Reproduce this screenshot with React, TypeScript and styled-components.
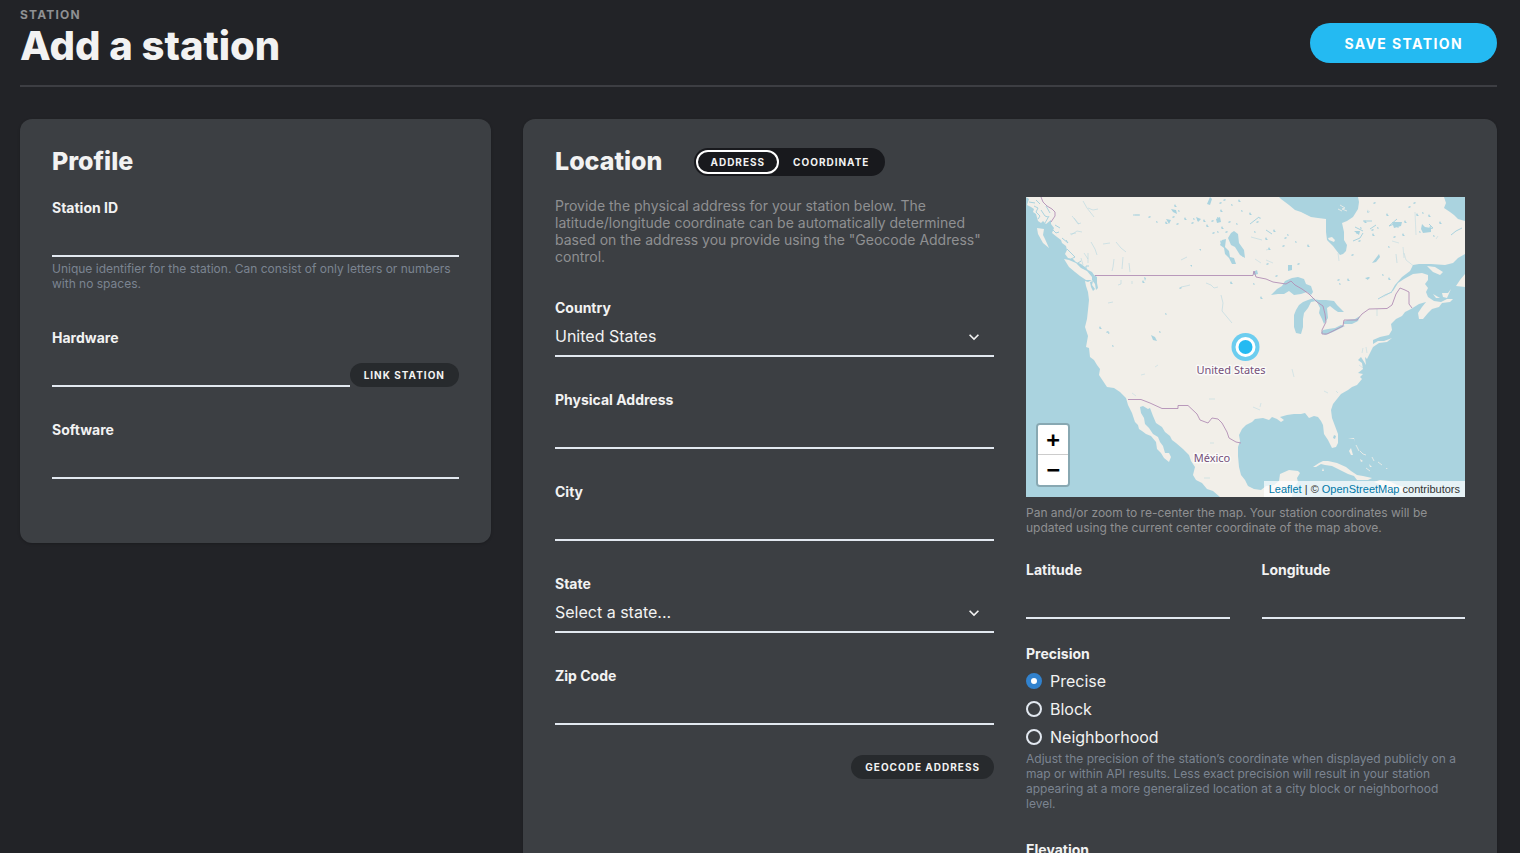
import React from "react";
import styled, { createGlobalStyle, css } from "styled-components";

const color = {
  page: "#222327",
  card: "#3c3f43",
  rule: "#3d3e43",
  text: "#f2f2f2",
  muted: "#8f9092",
  hint: "#7b8491",
  line: "#e2e8f0",
  accent: "#24baf2",
  chip: "#272a2d",
  track: "#18191d",
  radio: "#3182ce",
  water: "#aad3df",
  land: "#f2efe9",
  border: "#b28fb5",
};

const Global = createGlobalStyle`
  *, *::before, *::after { box-sizing: border-box; }
  body {
    margin: 0;
    background: ${color.page};
    color: ${color.text};
    font-family: Inter, "Liberation Sans", sans-serif;
    font-size: 16px;
  }
  button, input, select { font: inherit; color: inherit; }
`;

const Page = styled.div`
  padding: 0 23px 32px 20px;
`;

const Header = styled.header`
  display: flex;
  justify-content: space-between;
  align-items: flex-end;
  padding: 7px 0 16px;
  margin-bottom: 32px;
  border-bottom: 2px solid ${color.rule};
`;

const Eyebrow = styled.div`
  font-size: 12px;
  line-height: 16px;
  font-weight: 700;
  letter-spacing: 0.1em;
  text-transform: uppercase;
  color: ${color.muted};
`;

const PageTitle = styled.h1`
  margin: 0;
  font-size: 40px;
  line-height: 46px;
  font-weight: 800;
`;

const SaveButton = styled.button`
  height: 40px;
  margin-bottom: 6px;
  padding: 0 34px;
  border: 0;
  border-radius: 20px;
  background: ${color.accent};
  color: #fff;
  font-size: 14px;
  font-weight: 700;
  letter-spacing: 0.1em;
  text-transform: uppercase;
  cursor: pointer;
`;

const Cards = styled.main`
  display: grid;
  grid-template-columns: repeat(3, minmax(0, 1fr));
  gap: 32px;
  align-items: start;
`;

const Card = styled.section<{ $span?: number }>`
  grid-column: span ${(p) => p.$span ?? 1};
  padding: 28px 32px 64px;
  border-radius: 12px;
  background: ${color.card};
  box-shadow: 0 1px 3px rgba(0, 0, 0, 0.2);
`;

const CardHead = styled.div`
  display: flex;
  align-items: center;
  gap: 32px;
  height: 30px;
  margin-bottom: 20px;
`;

const CardTitle = styled.h2`
  margin: 0;
  padding-bottom: 2px;
  font-size: 25px;
  line-height: 28px;
  font-weight: 800;
`;

const Columns = styled.div`
  display: grid;
  grid-template-columns: repeat(2, minmax(0, 1fr));
  gap: 32px;
`;

const Stack = styled.div<{ $gap: number }>`
  display: flex;
  flex-direction: column;
  gap: ${(p) => p.$gap}px;
`;

const chip = css`
  height: 24px;
  border-radius: 12px;
  font-size: 10px;
  font-weight: 700;
  letter-spacing: 0.1em;
  text-transform: uppercase;
  white-space: nowrap;
  cursor: pointer;
`;

const Chip = styled.button`
  ${chip}
  flex: none;
  padding: 0 14px;
  border: 0;
  background: ${color.chip};
`;

const Toggle = styled.div`
  display: flex;
  padding: 2px;
  border-radius: 14px;
  background: ${color.track};
`;

const ToggleOption = styled.button<{ $active?: boolean }>`
  ${chip}
  padding: 0 12px;
  border: 2px solid ${(p) => (p.$active ? "#fff" : "transparent")};
  background: transparent;
`;

const labelText = css`
  display: block;
  padding-top: 2px;
  font-size: 14px;
  line-height: 18px;
  font-weight: 700;
`;

const Label = styled.label`
  ${labelText}
`;

const GroupLabel = styled.div`
  ${labelText}
`;

const control = css`
  display: block;
  width: 100%;
  min-width: 0;
  height: 40px;
  padding: 0;
  border: 0;
  border-bottom: 2px solid ${color.line};
  border-radius: 0;
  background: transparent;
  outline: none;
`;

const Input = styled.input`
  ${control}
`;

const ControlRow = styled.div`
  display: flex;
  align-items: flex-end;
`;

const SelectBox = styled.div`
  display: grid;
  align-items: center;

  > * {
    grid-area: 1 / 1;
  }
`;

const Select = styled.select`
  ${control}
  appearance: none;
  cursor: pointer;
`;

const Chevron = styled.svg`
  width: 20px;
  height: 20px;
  margin-right: 10px;
  justify-self: end;
  pointer-events: none;
`;

const Intro = styled.p`
  margin: 0;
  font-size: 14px;
  line-height: 17px;
  color: ${color.muted};
`;

const Hint = styled.p`
  margin: 4px 0;
  font-size: 12px;
  line-height: 15px;
  color: ${color.hint};
`;

const Caption = styled.p`
  margin: 8px 0 0;
  font-size: 12px;
  line-height: 15px;
  color: ${color.muted};
`;

const Actions = styled.div`
  display: flex;
  justify-content: flex-end;
  align-items: center;
  height: 20px;
`;

const Radios = styled.div`
  display: flex;
  flex-direction: column;
  gap: 8px;
  padding-top: 8px;
`;

const RadioRow = styled.label`
  display: flex;
  align-items: center;
  gap: 8px;
  height: 20px;
  cursor: pointer;
`;

const Radio = styled.input`
  appearance: none;
  width: 16px;
  height: 16px;
  margin: 0;
  border: 2px solid ${color.line};
  border-radius: 50%;

  &:checked {
    border: 5px solid ${color.radio};
    background: #fff;
  }
`;

const MapFrame = styled.div`
  position: relative;
  height: 300px;
  overflow: hidden;
  background: ${color.water};
`;

const MapArt = styled.svg`
  display: block;
  width: 100%;
  height: 100%;
`;

const Zoom = styled.div`
  position: absolute;
  left: 10px;
  bottom: 10px;
  border: 2px solid rgba(0, 0, 0, 0.2);
  border-radius: 4px;
  background-clip: padding-box;
`;

const ZoomButton = styled.button`
  display: block;
  width: 30px;
  height: 30px;
  padding: 0;
  border: 0;
  background: #fff;
  color: #000;
  font: bold 22px/28px "DejaVu Sans Mono", monospace;
  cursor: pointer;

  &:first-child {
    border-bottom: 1px solid #ccc;
    border-radius: 2px 2px 0 0;
  }
  &:last-child {
    border-radius: 0 0 2px 2px;
  }
`;

const Attribution = styled.div`
  position: absolute;
  right: 0;
  bottom: 0;
  padding: 0 5px;
  background: rgba(255, 255, 255, 0.7);
  color: #333;
  font: 11px/16px "Liberation Sans", sans-serif;

  a {
    color: #0078a8;
    text-decoration: none;
  }
`;

const LAND = `M0 0L3 2 1 8 5 10 8 12 7 15 10 17 12 24 15 26 17 24 20 27 25 23 25 27 28 31 26 36 31 40 35 43 36 46 40 49 41 53
39 57 42 61 47 62 50 65 55 67 59 70 62 73 66 75 68 78 71 80 71 86 72 91 70 93 69 87 66 83 62 85 59 84 60 89 62 95 63 103 62 113
61 122 59 130 62 139 60 150 63 151 64 160 68 163 71 168 74 172 73 178 77 184 81 190 88 191 94 195 100 201 102 208 106 216 109 225
112 228 113 232 116 234 120 237 125 239 130 245 131 252 135 256 138 261 143 265 145 260 143 256 139 256 137 249 134 245 132 240
127 237 123 231 119 227 118 221 115 216 114 210 117 209 122 212 124 211 127 219 130 226 136 230 139 235 144 239 146 243 150 246
157 252 163 258 165 264 169 270 167 278 170 283 176 286 181 292 187 294 194 300
L220 300 266 300 267 292 272 285 271 281 274 276 272 274 263 273 254 277 253 284 248 288 240 289 235 293 228 292 222 289 219 283
215 278 213 270 212 259 212 250 214 244 213 238 216 232 220 228 226 225 229 222 237 221 243 223 246 220 251 222 255 225 258 223
254 220 261 218 268 217 275 217 279 216 283 221 288 219 292 220 295 224 297 228 298 237 302 243 304 247 306 251 310 250 312 246
312 237 309 229 306 221 305 213 307 207 311 202 315 197 322 193 326 190 331 188 336 182 334 180 337 177 332 176 337 172 336 166
332 163 335 160 340 168 339 160 341 162 345 154 347 150 L353 146 361 145 366 141 358 144 352 144 347 147 347 143 354 140 363 138
366 133 365 127 370 122 376 119 379 115 385 112 393 107 400 105 396 110 392 116 393 122 397 122 402 116 406 112 413 110 416 106
424 105 427 102 421 102 415 105 408 104 402 100 400 95 402 91 399 87 402 83 402 78 396 76 387 77 378 82 372 86 367 94 361 98 354 102
L365 95 369 88 376 80 384 74 387 68 393 67 405 67 419 68 427 66 432 61 439 57
L439 24 432 22 428 18 424 15 418 11 420 6 418 0 L332 0 333 5 332 12 327 20 321 24 316 26 318 35 318 43 321 48 320 54 317 57 314 58
310 53 307 49 301 43 300 35 300 22 292 21 285 20 275 15 269 13 263 8 255 2 253 0Z`;

const ISLANDS = `M11 31L18 32 17 38 19 42 23 51 17 46 12 37Z
M38 62L43 63 50 66 55 71 61 74 66 80 66 83 60 83 54 79 49 75 43 70Z
M287 270L293 266 297 264 302 264 311 266 320 270 325 274 331 278 337 279 346 281 342 283 331 283 328 279 322 277 314 273 306 269 299 268 295 267 290 270Z
M297 271L298 274 296 274ZM348 285L354 283 363 284 371 288 378 290 378 296 368 294 362 297 351 294 344 292 355 291 353 287Z
M325 251L327 258 325 258 323 254ZM322 241L328 241 329 245 328 242Z
M302 41L306 40 309 43 308 45 303 43Z M401 69L409 70 417 75 414 78 407 75Z M407 97L414 101 410 101Z
M439 77L434 83 430 89 439 90Z M416 96L422 96 425 92 421 101 417 100Z M334 262L337 264 335 265ZM343 267L346 270 344 270ZM360 271L362 272 360 272Z`;

const LAKES = `M245 98L251 92 256 89 259 84 266 81 272 80 278 82 280 87 285 89 287 95 285 98 281 95 275 97 268 98 263 94 258 97 252 97Z
M288 101L282 103 277 105 273 108 270 113 268 118 268 130 270 136 275 137 277 130 277 122 278 116 282 111 285 105 290 104Z
M287 102L293 103 300 103 308 104 311 108 315 112 318 115 312 115 309 113 304 109 301 111 302 121 298 127 296 122 293 116 294 111 291 105Z
M295 136L299 138 307 135 315 131 319 129 315 128 309 131 302 132 297 133ZM317 125L321 123 329 122 334 119 332 124 326 127 318 127Z
M205 36L208 34 212 37 213 46 218 53 219 61 214 58 209 50 205 48 202 41Z
M196 43L200 42 199 50 203 54 204 60 208 61 210 67 206 67 203 61 199 57 198 51 194 48Z
M262 68L266 68 266 73 262 74ZM184 0L186 2 184 8 181 7Z
M125 138L129 140 131 144 127 143ZM308 238L310 239 309 242 307 241Z
M118 80L120 81 119 84ZM64 85L67 84 66 88 69 92 67 94 65 90Z
M145 12L150 13 151 17 147 15ZM190 22L194 20 195 25 191 26ZM140 22L145 23 143 27ZM170 20L175 22 172 25Z
M366 25L376 25 375 29 368 31ZM396 27L399 30 405 31 405 35 397 36 395 32ZM328 34L334 34 333 38ZM346 66L350 61 353 57 354 60 350 65Z
M227 75L231 73 232 77 228 78ZM339 81L343 80 342 83Z M164 68L166 68 166 70ZM82 135L84 136 82 137ZM71 131L73 132ZM173 52L175 52 175 54Z`;

const RIVERS = `M57 4L61 11 68 20 M62 11L67 13 72 12 M48 21L52 27 55 26 M45 38L51 34 56 35 M65 45L69 52 71 58 M90 45L95 51 100 55
M88 62L87 70 86 74 M97 60L96 72 M103 66L104 75 M55 61L57 68 M62 56L62 66 M82 106L87 105 M95 83L95 87 92 88 M106 84L106 87
M155 90L160 89 164 88 M180 86L185 88 188 91 192 90 M195 98L197 106 196 114 201 120 206 126 M77 47L84 46 M155 63L161 60
M109 18L113 18 M204 86L206 86 M46 19L53 27 M50 36L44 37 M62 62L58 56 M225 40L236 43 M370 57L371 66`;

const FJORDS = `M27 33L30 36 33 35 M36 41L42 46 40 43 M41 52L49 60 45 62 M52 66L55 64 M63 69L60 69 60 72 M8 9L12 11 10 15 14 19 12 22
M3 5L9 6 M15 13L19 19 22 20 M20 9L24 16 M10 3L14 7 M19 26L23 19 M29 28L34 31 M224 27L233 20 M240 33L246 37
M352 102L359 98 366 95 M327 44L334 41 337 36 M344 32L350 28 M329 30L337 34 M425 38L430 34 436 31 M337 24L346 24
M371 22L363 29 371 26 M403 27L407 31 399 33 M107 18L114 18`;

const CREEKS = `M351 112L351 119 M389 15L390 38 M378 56L380 63 389 70 M377 50L378 61 M410 42L412 39 M366 44L373 46 M341 13L344 15
M229 62L235 66 M312 56L313 64 M240 63L247 66 M240 53L244 52 M183 202L189 202 M178 281L184 281 M266 172L268 180 M227 210L234 213
M298 194L302 196 M310 194L312 196 M106 196L110 199 M115 178L119 177 M129 170L132 168 M333 168L337 171 M337 151L336 156
M340 150L341 156 M184 246L188 246 M235 206L234 210`;

const SPECKS: Array<[number, number]> = [
  [123, 20], [131, 24], [140, 26], [147, 20], [153, 13], [159, 22], [166, 26], [172, 22], [181, 29], [186, 24], [192, 20], [195, 14],
  [198, 3], [206, 7], [213, 4], [203, 25], [211, 26], [196, 31], [187, 36], [192, 34], [149, 9], [151, 27], [168, 21], [178, 24],
  [194, 6], [216, 13], [195, 45], [200, 35], [217, 58], [224, 17], [231, 25], [229, 34], [240, 42], [259, 41], [270, 44], [282, 49],
  [241, 67], [228, 86], [235, 101], [250, 79], [262, 37], [248, 34], [272, 67], [342, 14], [339, 25], [348, 6], [352, 30], [361, 18],
  [368, 40], [363, 49], [377, 38], [388, 6], [397, 15], [403, 19], [404, 30], [394, 34], [391, 18], [333, 44], [331, 35], [347, 38],
  [326, 58], [314, 86], [322, 83], [342, 81], [357, 77], [363, 82], [387, 72], [408, 38], [414, 26], [312, 83],
  [140, 116], [117, 85], [154, 91], [134, 134], [74, 131], [81, 135], [87, 148], [205, 86], [95, 226], [136, 290], [399, 204],
  [383, 10], [372, 29], [379, 25], [346, 33], [335, 30], [243, 52], [257, 49], [234, 20],
];

const BORDERS = `M15 0L17 5 21 9 26 12 29 15 29 19 25 25 M69 78.5H227L228 74 230 80 240 82 247 85 260 87 265 84 269 88 276 92 283 97 286 100 291 105
297 109 299 117 300 125 296 133 296 137 301 137 309 133 317 129 318 123 331 123 336 117 343 112 361 111.5 366 108 370 97 374 91
379 93 383 95 383 107 386 111
M102 202.5H115L124 206 136 211.5H152V208.5H162L171 217 174 223 182 226 186 221 192 222 196 226 201 235 203 241 210 245 215 246`;

function speck(x: number, y: number, i: number) {
  if (i % 3 === 0) return `M${x - 1} ${y}l2 -1 1 1 -2 1Z`;
  if (i % 3 === 1) return `M${x - 1} ${y}l2 1 -1 1 -1 -1Z`;
  return `M${x - 1} ${y}l1 -2 1 2 1 1 -2 0Z`;
}

function StationMap() {
  return (
    <MapFrame>
      <MapArt viewBox="0 0 439 300" preserveAspectRatio="xMidYMid slice" role="img" aria-label="Map of North America">
        <path d={LAND} fill={color.land} />
        <path d={ISLANDS} fill={color.land} />
        <path d={LAKES} fill={color.water} />
        <path d={RIVERS} fill="none" stroke={color.water} strokeWidth="0.7" strokeOpacity="0.7" />
        <path d={FJORDS} fill="none" stroke={color.water} strokeWidth="1" />
        <path d={CREEKS} fill="none" stroke={color.water} strokeWidth="0.6" strokeOpacity="0.7" />
        {SPECKS.map(([x, y], i) => (
          <path key={i} d={speck(x, y, i)} fill={color.water} />
        ))}
        <path
          d="M314 8l5 3-3 1 5 2M312 12l4 2M340 271l4 3M334 254l3 3 3 1M346 260l2 4M352 265l4 3M330 248l3 6"
          fill="none"
          stroke={color.land}
          strokeWidth="0.8"
        />
        <path d={BORDERS} fill="none" stroke={color.border} strokeWidth="0.9" strokeLinejoin="round" />
        <g
          fontFamily="'Noto Sans', sans-serif"
          fontSize="11"
          textAnchor="middle"
          fill="#75507a"
          stroke="#fff"
          strokeOpacity="0.7"
          strokeWidth="3"
          paintOrder="stroke"
          strokeLinejoin="round"
        >
          <text x="205" y="177">United States</text>
          <text x="186" y="265">México</text>
        </g>
        <circle cx="219.5" cy="150" r="14" fill={color.accent} fillOpacity="0.65" />
        <circle cx="219.5" cy="150" r="10" fill="#fff" />
        <circle cx="219.5" cy="150" r="7" fill={color.accent} />
      </MapArt>
      <Zoom>
        <ZoomButton type="button" aria-label="Zoom in">+</ZoomButton>
        <ZoomButton type="button" aria-label="Zoom out">−</ZoomButton>
      </Zoom>
      <Attribution>
        <a href="#leaflet">Leaflet</a> | © <a href="#osm">OpenStreetMap</a> contributors
      </Attribution>
    </MapFrame>
  );
}

function TextField({ id, label, hint, action }: { id: string; label: string; hint?: string; action?: string }) {
  return (
    <div>
      <Label htmlFor={id}>{label}</Label>
      <ControlRow>
        <Input id={id} type="text" />
        {action && <Chip type="button">{action}</Chip>}
      </ControlRow>
      {hint && <Hint>{hint}</Hint>}
    </div>
  );
}

function SelectField({ id, label, value }: { id: string; label: string; value: string }) {
  return (
    <div>
      <Label htmlFor={id}>{label}</Label>
      <SelectBox>
        <Select id={id}>
          <option>{value}</option>
        </Select>
        <Chevron viewBox="0 0 24 24" fill="currentColor" aria-hidden="true">
          <path d="M16.59 8.59L12 13.17 7.41 8.59 6 10l6 6 6-6z" />
        </Chevron>
      </SelectBox>
    </div>
  );
}

export default function App() {
  return (
    <>
      <Global />
      <Page>
        <Header>
          <div>
            <Eyebrow>Station</Eyebrow>
            <PageTitle>Add a station</PageTitle>
          </div>
          <SaveButton type="button">Save station</SaveButton>
        </Header>
        <Cards>
          <Card>
            <CardHead>
              <CardTitle>Profile</CardTitle>
            </CardHead>
            <Stack $gap={32}>
              <TextField
                id="station-id"
                label="Station ID"
                hint="Unique identifier for the station. Can consist of only letters or numbers with no spaces."
              />
              <TextField id="hardware" label="Hardware" action="Link station" />
              <TextField id="software" label="Software" />
            </Stack>
          </Card>
          <Card $span={2}>
            <CardHead>
              <CardTitle>Location</CardTitle>
              <Toggle>
                <ToggleOption type="button" $active aria-pressed="true">Address</ToggleOption>
                <ToggleOption type="button" aria-pressed="false">Coordinate</ToggleOption>
              </Toggle>
            </CardHead>
            <Columns>
              <Stack $gap={32}>
                <Intro>
                  Provide the physical address for your station below. The latitude/longitude coordinate can be
                  automatically determined based on the address you provide using the "Geocode Address" control.
                </Intro>
                <SelectField id="country" label="Country" value="United States" />
                <TextField id="address" label="Physical Address" />
                <TextField id="city" label="City" />
                <SelectField id="state" label="State" value="Select a state..." />
                <TextField id="zip" label="Zip Code" />
                <Actions>
                  <Chip type="button">Geocode address</Chip>
                </Actions>
              </Stack>
              <Stack $gap={24}>
                <div>
                  <StationMap />
                  <Caption>
                    Pan and/or zoom to re-center the map. Your station coordinates will be updated using the current
                    center coordinate of the map above.
                  </Caption>
                </div>
                <Columns>
                  <TextField id="latitude" label="Latitude" />
                  <TextField id="longitude" label="Longitude" />
                </Columns>
                <div role="radiogroup" aria-labelledby="precision">
                  <GroupLabel id="precision">Precision</GroupLabel>
                  <Radios>
                    {["Precise", "Block", "Neighborhood"].map((name, i) => (
                      <RadioRow key={name}>
                        <Radio type="radio" name="precision" defaultChecked={i === 0} />
                        {name}
                      </RadioRow>
                    ))}
                  </Radios>
                  <Hint>
                    Adjust the precision of the station’s coordinate when displayed publicly on a map or within API
                    results. Less exact precision will result in your station appearing at a more generalized location
                    at a city block or neighborhood level.
                  </Hint>
                </div>
                <TextField id="elevation" label="Elevation" />
              </Stack>
            </Columns>
          </Card>
        </Cards>
      </Page>
    </>
  );
}
